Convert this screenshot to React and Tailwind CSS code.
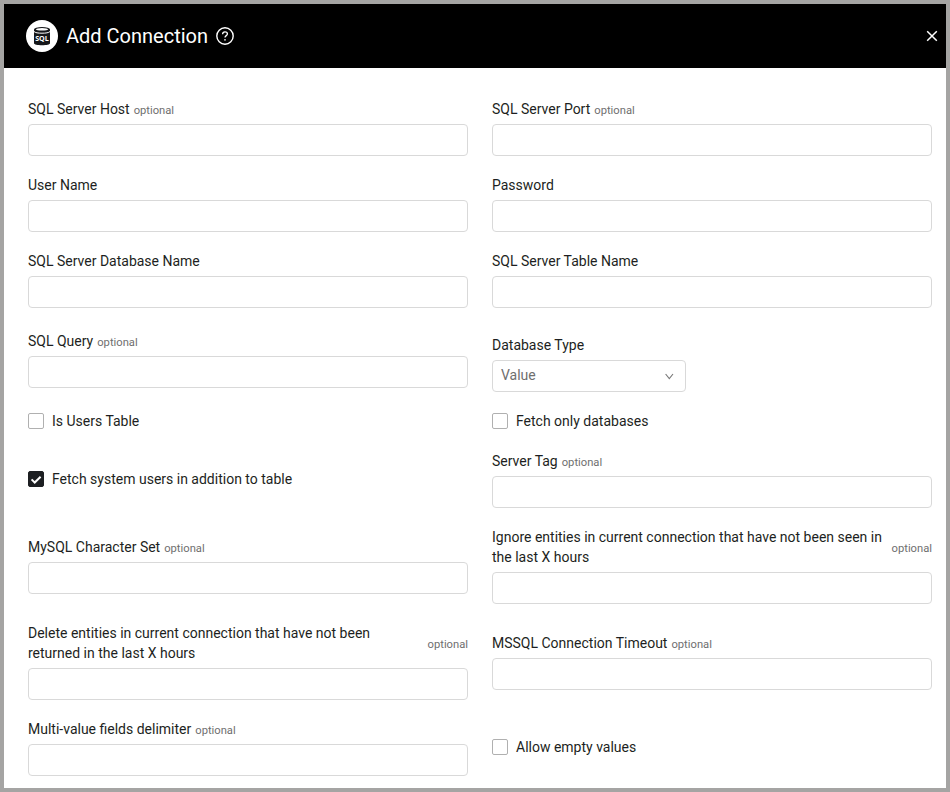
function Label({ text, optional, split }) {
  return (
    <div className={`flex items-center leading-5 ${split ? 'justify-between' : ''}`}>
      <span className={split || ''}>{text}</span>
      {optional && (
        <span className="ml-1 pt-[3px] text-[11.2px] leading-[17px] text-[#6f6f6f]">optional</span>
      )}
    </div>
  );
}

function Field({ label, optional, split }) {
  return (
    <div className="w-full">
      <Label text={label} optional={optional} split={split} />
      <input
        type="text"
        aria-label={label}
        className="mt-[5px] block h-8 w-full rounded border border-[#d9d9d9] bg-white px-2 outline-none"
      />
    </div>
  );
}

function SelectField({ label }) {
  return (
    <div className="w-full pt-2">
      <Label text={label} />
      <div className="mt-[5px] flex h-8 w-[194px] items-center justify-between rounded border border-[#d9d9d9] pr-[11px] pl-2">
        <span className="pb-0.5 text-[#6f6f6f]">Value</span>
        <svg width="10" height="10" viewBox="0 0 10 10" fill="none" stroke="#777" strokeWidth="1.1">
          <path d="M1.6 3 5.3 7.6 9 3" />
        </svg>
      </div>
    </div>
  );
}

function CheckField({ label, checked }) {
  return (
    <div className="flex h-[21px] w-full items-center gap-2 pb-px leading-5">
      <span
        className={`flex size-4 items-center justify-center rounded-[2px] border ${
          checked ? 'border-[#1d1f22] bg-[#1d1f22]' : 'border-[#b0b0b0] bg-white'
        }`}
      >
        {checked && (
          <svg className="shrink-0" width="14" height="14" viewBox="0 0 14 14" fill="none" stroke="#fff" strokeWidth="2">
            <path d="M2.6 7.4 5.7 10.5 11.6 4.8" />
          </svg>
        )}
      </span>
      <span>{label}</span>
    </div>
  );
}

function SqlLogo() {
  return (
    <span className="flex size-8 items-center justify-center rounded-full bg-white">
      <svg width="32" height="32" viewBox="0 0 32 32">
        <path d="M8 9.5v13.7c0 1.2 3.600 2 8 2s8-.8 8-2v-13.700z" fill="#15171a" />
        <ellipse cx="16" cy="9.5" rx="8" ry="2.6" fill="#15171a" />
        <ellipse cx="16" cy="9.3" rx="6.2" ry="1.2" fill="#fff" />
        <path d="M8 11.5c1.2 1.3 4.2 1.7 8 1.700s6.800-.4 8-1.700" fill="none" stroke="#fff" strokeWidth="1" />
        <text x="16" y="21" textAnchor="middle" fontFamily="'Open Sans', sans-serif" fontWeight="700" fontSize="7.5" textLength="13.6" lengthAdjust="spacingAndGlyphs" fill="#fff">
          SQL
        </text>
      </svg>
    </span>
  );
}

export default function App() {
  return (
    <div className="h-[792px] w-[950px] overflow-hidden border-4 border-[#a5a4a3] bg-white font-[Roboto,sans-serif] text-sm text-[#1d1f22]">
      <header className="flex h-16 items-center bg-black pr-2 pl-[22px] text-white">
        <SqlLogo />
        <h1 className="ml-2 text-xl leading-7">Add Connection</h1>
        <svg className="ml-2" width="18" height="18" viewBox="0 0 18 18" fill="none" stroke="#fff" strokeWidth="1.4">
          <circle cx="9" cy="9" r="8.2" />
          <path d="M6.6 7.2c0-1.4 1-2.3 2.4-2.3s2.4.9 2.4 2.1c0 1.5-2.4 1.8-2.4 3.5" strokeWidth="1.3" />
          <circle cx="9" cy="12.8" r=".85" fill="#fff" stroke="none" />
        </svg>
        <svg className="ml-auto" width="12" height="12" viewBox="0 0 12 12" stroke="#fff" strokeWidth="1.5">
          <path d="M1.2 1.2 10.8 10.8M10.8 1.2 1.2 10.8" />
        </svg>
      </header>
      <form className="grid grid-cols-[440px_440px] items-center gap-x-6 gap-y-[19px] px-6 pt-[31px]">
        <Field label="SQL Server Host" optional />
        <Field label="SQL Server Port" optional />
        <Field label="User Name" />
        <Field label="Password" />
        <Field label="SQL Server Database Name" />
        <Field label="SQL Server Table Name" />
        <Field label="SQL Query" optional />
        <SelectField label="Database Type" />
        <CheckField label="Is Users Table" />
        <CheckField label="Fetch only databases" />
        <CheckField label="Fetch system users in addition to table" checked />
        <Field label="Server Tag" optional />
        <Field label="MySQL Character Set" optional />
        <Field
          label="Ignore entities in current connection that have not been seen in the last X hours"
          optional
          split="w-[395px]"
        />
        <Field
          label="Delete entities in current connection that have not been returned in the last X hours"
          optional
          split="w-[395px]"
        />
        <Field label="MSSQL Connection Timeout" optional />
        <Field label="Multi-value fields delimiter" optional />
        <CheckField label="Allow empty values" />
      </form>
    </div>
  );
}
